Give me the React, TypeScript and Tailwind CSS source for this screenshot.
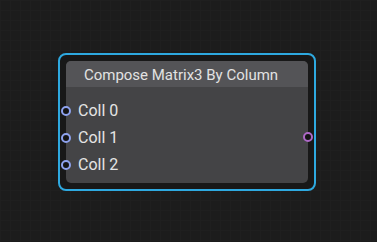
const inputs = ['Coll 0', 'Coll 1', 'Coll 2']

function Socket({ color }: { color: string }) {
  return (
    <span
      className="block h-[10px] w-[10px] rounded-full border-2 bg-[#141414]"
      style={{ borderColor: color }}
    />
  )
}

export default function App() {
  return (
    <div
      className="h-[242px] w-[377px] bg-[#1c1c1c] pl-[58px] pt-[53px] font-['Roboto',sans-serif]"
      style={{
        backgroundImage:
          'linear-gradient(#1f1f1f 1px, transparent 1px), linear-gradient(90deg, #1f1f1f 1px, transparent 1px)',
        backgroundSize: '10px 10px',
      }}
    >
      {/* selected node outline */}
      <div className="w-[258px] rounded-[8px] border-2 border-[#2ea9e0] bg-[#181818] p-[6px]">
        <div className="relative h-[122px] rounded-[5px] bg-[#444446]">
          <div className="flex h-[26px] items-center justify-center rounded-t-[5px] bg-[#545457] pr-[12px] pt-[2px] text-[15px] text-[#e2e2e2]">
            Compose Matrix3 By Column
          </div>
          <div className="flex flex-col gap-[8px] pt-[14px]">
            {inputs.map((name) => (
              <div key={name} className="flex h-[19px] items-center">
                <div className="-ml-[5px]">
                  <Socket color="#8ea2ee" />
                </div>
                <span className="ml-[7px] text-[16px] text-[#e4e4e4]">{name}</span>
              </div>
            ))}
          </div>
          <div className="absolute right-[-5px] top-[71px]">
            <Socket color="#ad68c6" />
          </div>
        </div>
      </div>
    </div>
  )
}
